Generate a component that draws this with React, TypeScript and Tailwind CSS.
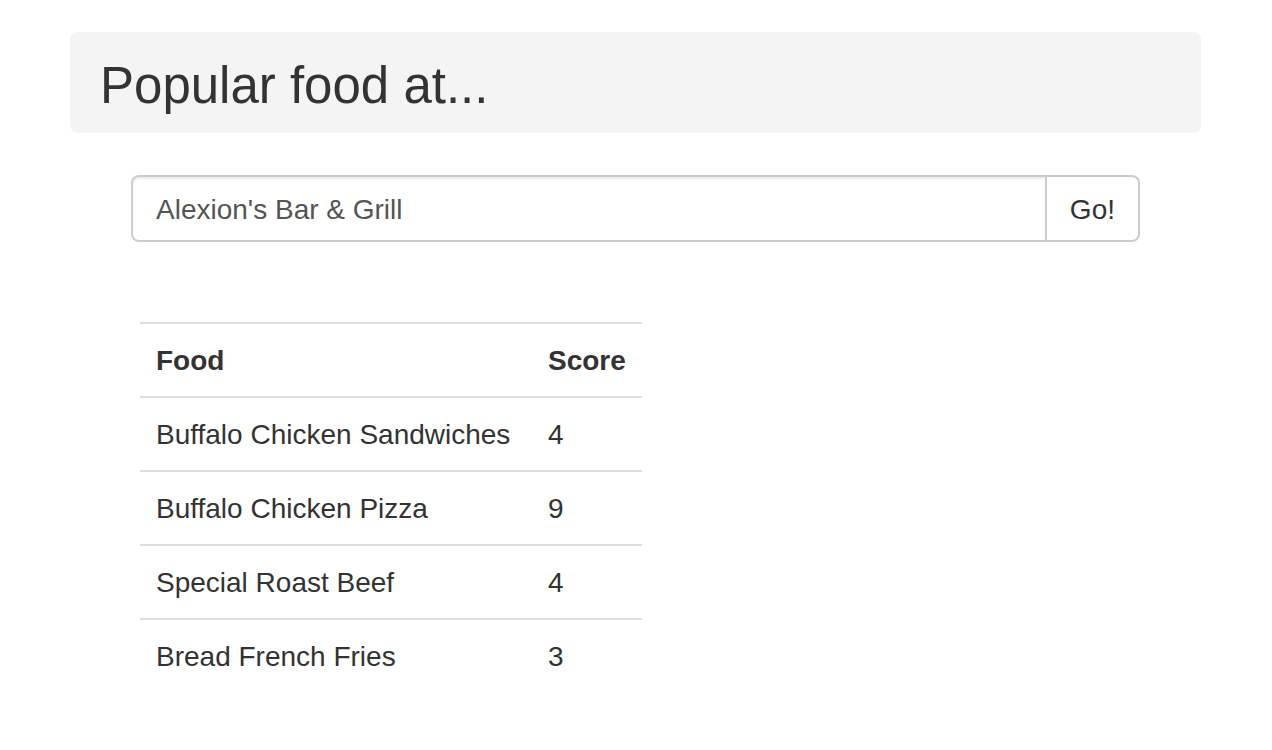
const foods = [
  { name: 'Buffalo Chicken Sandwiches', score: 4 },
  { name: 'Buffalo Chicken Pizza', score: 9 },
  { name: 'Special Roast Beef', score: 4 },
  { name: 'Bread French Fries', score: 3 },
];

export default function App() {
  return (
    <div className="min-h-screen bg-white text-[#333] font-['Liberation_Sans',Arial,sans-serif]">
      <div className="pl-[70px] pr-[71px] pt-[32px]">
        <div className="bg-[#f4f4f4] rounded-[8px] px-[30px] pt-[26px] pb-[20px]">
          <h1 className="text-[51px] leading-[55px] font-normal">Popular food at...</h1>
        </div>

        <div className="mx-[61px] mt-[42px] flex h-[67px]">
          <input
            className="flex-1 min-w-0 border-2 border-[#ccc] border-r-0 rounded-l-[8px] pl-[23px] pr-[24px] pt-[2px] text-[28px] text-[#555] shadow-[inset_0_2px_2px_rgba(0,0,0,0.075)] outline-none"
            defaultValue="Alexion's Bar & Grill"
          />
          <button className="border-2 border-[#ccc] rounded-r-[8px] px-[23px] pt-[2px] text-[28px] text-[#333] bg-white">
            Go!
          </button>
        </div>

        <div className="ml-[70px] mt-[80px]">
          <table className="w-[502px] text-[28px] leading-[40px] border-collapse">
            <thead>
              <tr className="border-t-2 border-b-2 border-[#ddd]">
                <th className="w-[392px] text-left font-bold px-[16px] pt-[17px] pb-[15px]">Food</th>
                <th className="text-left font-bold px-[16px] pt-[17px] pb-[15px]">Score</th>
              </tr>
            </thead>
            <tbody>
              {foods.map((f, i) => (
                <tr key={f.name} className={i < foods.length - 1 ? 'border-b-2 border-[#ddd]' : ''}>
                  <td className="px-[16px] pt-[17px] pb-[15px]">{f.name}</td>
                  <td className="px-[16px] pt-[17px] pb-[15px]">{f.score}</td>
                </tr>
              ))}
            </tbody>
          </table>
        </div>
      </div>
    </div>
  );
}
